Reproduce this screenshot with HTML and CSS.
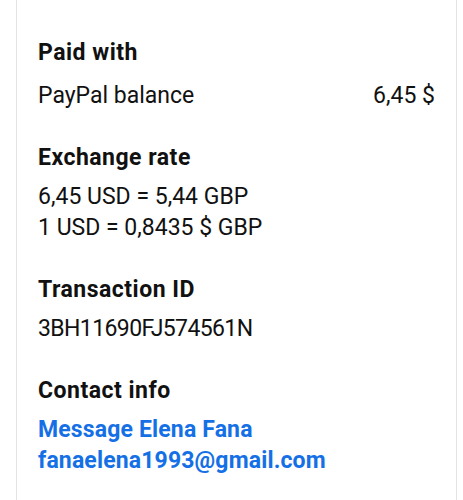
FILE: index.html
```html
<!DOCTYPE html>
<html lang="en">
<head>
    <meta charset="UTF-8">
    <meta name="viewport" content="width=device-width, initial-scale=1.0">
    <title>Transaction details</title>
    <link rel="stylesheet" href="styles.css">
</head>
<body>
    <div class="card">
        <section class="block">
            <h2>Paid with</h2>
            <div class="row first">
                <span>PayPal balance</span>
                <span>6,45 $</span>
            </div>
        </section>

        <section class="block">
            <h2>Exchange rate</h2>
            <p>6,45 USD = 5,44 GBP</p>
            <p>1 USD = 0,8435 $ GBP</p>
        </section>

        <section class="block">
            <h2>Transaction ID</h2>
            <p class="tx-id">3BH11690FJ574561N</p>
        </section>

        <section class="block">
            <h2>Contact info</h2>
            <a href="#" class="link">Message Elena Fana</a>
            <a href="#" class="link">fanaelena1993@gmail.com</a>
        </section>
    </div>
</body>
</html>
```

FILE: styles.css
```css
body {
    font-family: Roboto, "Noto Sans", sans-serif;
    background-color: #ffffff;
    margin: 0;
    padding: 0;
    color: #111;
}
.card {
    margin: 0 6px 0 16px;
    min-height: 500px;
    border-left: 1px solid #e3e3e3;
    border-right: 1px solid #e3e3e3;
    padding: 38px 21px 0 21px;
    box-sizing: border-box;
}
.block {
    margin-bottom: 32px;
}
h2 {
    font-size: 23px;
    font-weight: 700;
    letter-spacing: 0.5px;
    margin: 0 0 8px;
    line-height: 30px;
}
p {
    margin: 0;
    font-size: 23px;
    line-height: 31px;
}
.tx-id {
    letter-spacing: -0.6px;
}
.row {
    display: flex;
    justify-content: space-between;
    font-size: 23px;
    line-height: 31px;
}
.row.first {
    margin-top: 12px;
}
.link {
    display: block;
    color: #1570e6;
    font-size: 23px;
    font-weight: 700;
    letter-spacing: 0.15px;
    line-height: 31px;
    text-decoration: none;
}
```
